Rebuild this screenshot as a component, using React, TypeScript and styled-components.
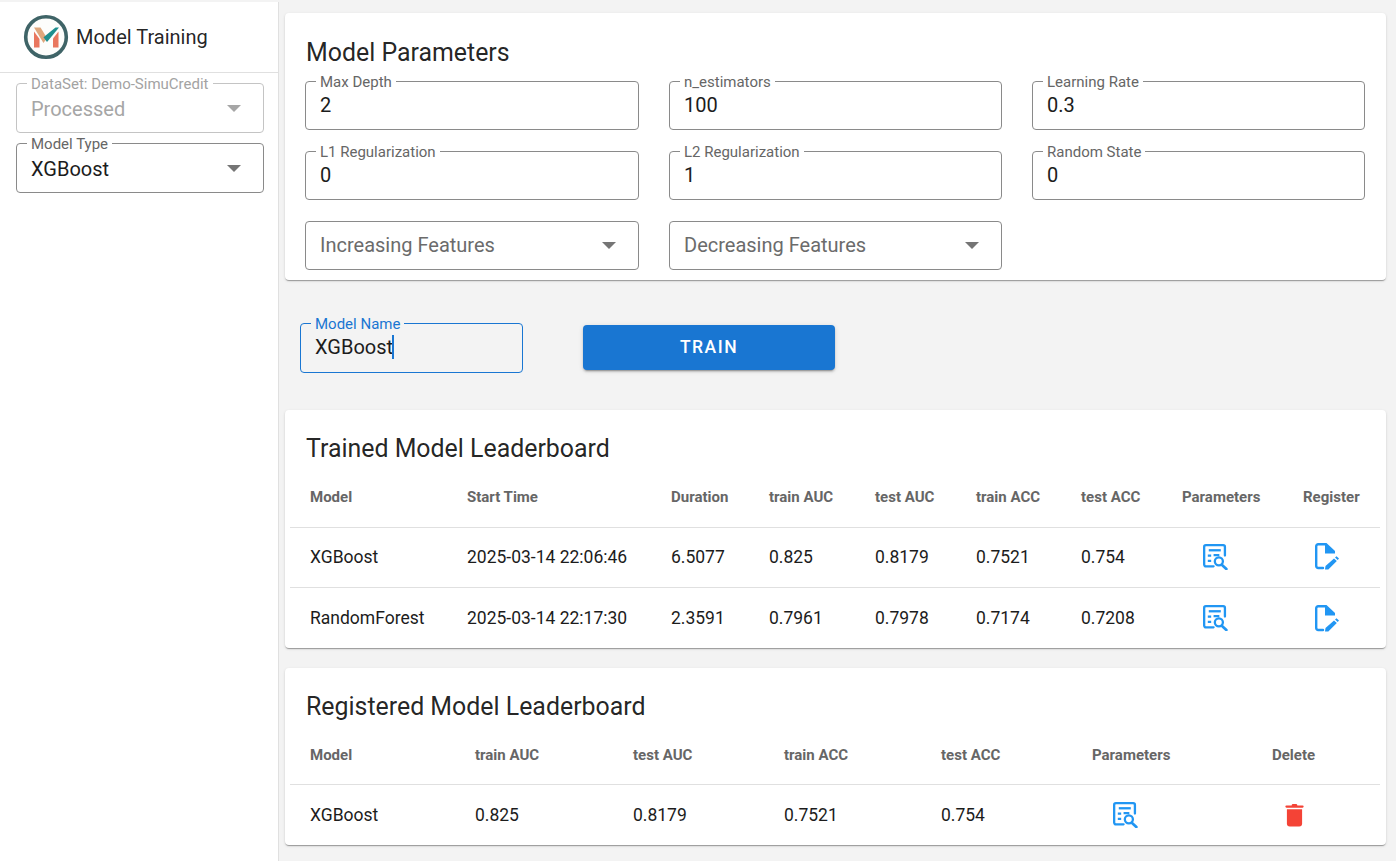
import React from 'react';
import styled, { createGlobalStyle } from 'styled-components';

const GlobalStyle = createGlobalStyle`
  html, body {
    margin: 0;
    height: 100%;
    overflow: hidden;
    background-color: #f3f3f3;
    font-family: Roboto, "Liberation Sans", sans-serif;
    color: rgba(0, 0, 0, 0.87);
  }
  * {
    box-sizing: border-box;
  }
`;

const Page = styled.div`
  display: flex;
  height: 861px;
  padding-top: 2px;
`;

const Sidebar = styled.aside`
  width: 279px;
  flex: none;
  background-color: #fff;
  border-right: 1px solid #e0e0e0;
`;

const SidebarHeader = styled.div`
  display: flex;
  align-items: center;
  gap: 7px;
  height: 71px;
  padding: 0 0 0 23px;
  border-bottom: 1px solid #e0e0e0;
  font-size: 20px;
`;

const SidebarFields = styled.div`
  display: flex;
  flex-direction: column;
  gap: 10px;
  padding: 10px 14px 0 16px;
`;

const Main = styled.main`
  flex: 1;
  display: flex;
  flex-direction: column;
  padding: 11px 10px 0 6px;
`;

const Card = styled.section<{ $height: number; $gapAfter?: number }>`
  height: ${(p) => p.$height}px;
  margin-bottom: ${(p) => p.$gapAfter ?? 0}px;
  background-color: #fff;
  border-radius: 4px;
  box-shadow: 0 2px 1px -1px rgba(0, 0, 0, 0.2), 0 1px 1px 0 rgba(0, 0, 0, 0.14),
    0 1px 3px 0 rgba(0, 0, 0, 0.12);
`;

const ParamsCard = styled(Card)`
  padding: 26px 21px 0 20px;
`;

const CardTitle = styled.h2`
  margin: 0;
  font-size: 24.9px;
  font-weight: 400;
  line-height: 28px;
`;

const ParamsTitle = styled(CardTitle)`
  padding-left: 1px;
`;

const ParamGrid = styled.div`
  display: grid;
  grid-template-columns: 334px 333px 333px;
  column-gap: 30px;
  row-gap: 21px;
  margin-top: 14px;
`;

const Field = styled.div<{ $accent?: boolean; $muted?: boolean; $w?: number; $h?: number }>`
  position: relative;
  display: flex;
  align-items: center;
  justify-content: space-between;
  width: ${(p) => (p.$w ? `${p.$w}px` : 'auto')};
  height: ${(p) => p.$h ?? 49}px;
  padding: 0 22px 0 14px;
  border-radius: 4px;
  border: 1px solid ${(p) => (p.$accent ? '#1976d2' : p.$muted ? '#c4c4c4' : '#8a8a8a')};
`;

const Legend = styled.span<{ $accent?: boolean; $muted?: boolean }>`
  position: absolute;
  top: -8px;
  left: 10px;
  padding: 0 4px;
  font-size: 15px;
  line-height: 16px;
  color: ${(p) => (p.$accent ? '#1976d2' : p.$muted ? '#a3a3a3' : '#666')};
  background-color: ${(p) => (p.$accent ? '#f3f3f3' : '#fff')};
`;

const FieldValue = styled.span<{ $muted?: boolean; $placeholder?: boolean; $low?: boolean }>`
  display: inline-flex;
  align-items: center;
  padding: ${(p) => (p.$low ? '2px 0 0' : '0 0 2px')};
  font-size: 20px;
  line-height: 24px;
  color: ${(p) => (p.$muted ? '#a6a6a6' : p.$placeholder ? '#6b6b6b' : '#1c1c1c')};
`;

const Caret = styled.span`
  display: inline-block;
  width: 2px;
  height: 24px;
  margin-left: -1px;
  background-color: #1976d2;
`;

const TrainRow = styled.div`
  display: flex;
  align-items: center;
  height: 130px;
  padding: 6px 0 0 15px;
  gap: 60px;
`;

const TrainButton = styled.button`
  width: 252px;
  height: 45px;
  margin-bottom: 2px;
  border: none;
  border-radius: 4px;
  background-color: #1976d2;
  color: #fff;
  font-family: inherit;
  font-size: 17.5px;
  font-weight: 500;
  letter-spacing: 1.5px;
  box-shadow: 0 3px 1px -2px rgba(0, 0, 0, 0.2), 0 2px 2px 0 rgba(0, 0, 0, 0.14),
    0 1px 5px 0 rgba(0, 0, 0, 0.12);
`;

const TableCard = styled(Card)`
  padding: 25px 6px 0 5px;
`;

const TableTitle = styled(CardTitle)`
  padding-left: 16px;
`;

const Row = styled.div<{ $cols: string; $height: number; $head?: boolean; $last?: boolean; $raised?: boolean }>`
  display: grid;
  grid-template-columns: ${(p) => p.$cols};
  align-items: center;
  height: ${(p) => p.$height}px;
  padding: ${(p) => (p.$head ? '4px' : '0')} 0 ${(p) => (p.$raised ? '2px' : '0')} 20px;
  border-bottom: ${(p) => (p.$last ? 'none' : '1px solid #e0e0e0')};
  font-size: ${(p) => (p.$head ? '15px' : '17.5px')};
  font-weight: ${(p) => (p.$head ? 700 : 400)};
  color: ${(p) => (p.$head ? '#666' : '#1c1c1c')};
`;

const IconCell = styled.span<{ $shift: number }>`
  display: flex;
  padding-left: ${(p) => p.$shift}px;
`;

const trainedCols = '157px 204px 98px 106px 101px 105px 101px 121px 1fr';
const registeredCols = '165px 158px 151px 157px 151px 180px 1fr';

const SearchDocIcon = () => (
  <svg width="25" height="26" viewBox="0 0 26 27" fill="none">
    <path
      d="M11 23.200H3a1.800 1.800 0 0 1-1.800-1.800V3A1.800 1.800 0 0 1 3 1.200h18A1.800 1.800 0 0 1 22.800 3v9"
      stroke="#2196f3"
      strokeWidth="2.400"
      strokeLinecap="round"
    />
    <path d="M6 6.500h12.500" stroke="#2196f3" strokeWidth="2.400" />
    <path d="M5 12h3.500M5 17.500h3.500M11 11.500h6" stroke="#2196f3" strokeWidth="2.400" />
    <circle cx="16.500" cy="18" r="4.200" stroke="#2196f3" strokeWidth="2.400" />
    <path d="M19.500 21.500l4.800 4.500" stroke="#2196f3" strokeWidth="2.800" strokeLinecap="round" />
  </svg>
);

const EditDocIcon = () => (
  <svg width="24" height="27" viewBox="0 0 24 27" fill="none">
    <path
      d="M8 25H3.200a2 2 0 0 1-2-2V3.200a2 2 0 0 1 2-2H10"
      stroke="#2196f3"
      strokeWidth="2.400"
      strokeLinecap="round"
    />
    <path d="M10 0h1.500l8.500 8v2.500H10z" fill="#2196f3" />
    <path d="M10 26.500l.5-3.500 8.500-7.500 2.800 2.500-8.500 8.500z" fill="#2196f3" />
    <path d="M20 14.500l1.500-1.300 2.500 2.300-1.300 1.500z" fill="#2196f3" />
  </svg>
);

const TrashIcon = () => (
  <svg width="19" height="24" viewBox="0 0 20 24" fill="none">
    <path d="M7 2a1.500 1.500 0 0 1 1.500-1.500h3A1.500 1.500 0 0 1 13 2h5.500a1 1 0 0 1 0 2.300H1.500a1 1 0 0 1 0-2.300z" fill="#f44336" />
    <path d="M2 6h16v15a3 3 0 0 1-3 3H5a3 3 0 0 1-3-3z" fill="#f44336" />
  </svg>
);

const LogoIcon = () => (
  <svg width="46" height="46" viewBox="0 0 46 46" fill="none">
    <circle cx="23" cy="23" r="20.300" fill="#fdfdfb" stroke="#3f6467" strokeWidth="3.600" />
    <path d="M11 13.500h6.500L24 24l-3.500 5z" fill="#dfa77c" />
    <path d="M32.500 13.500h3.500L24 28l-3.500-4.800z" fill="#1f8f8e" />
    <path d="M11 17.500l5.500 7.500v8.500H11z" fill="#e9775e" />
    <path d="M35.500 17.500V33.500H30V24.500z" fill="#e9775e" />
  </svg>
);

const ArrowIcon = ({ muted }: { muted?: boolean }) => (
  <svg width="14" height="7" viewBox="0 0 14 7">
    <path d="M0 0h14L7 7z" fill={muted ? '#a6a6a6' : '#757575'} />
  </svg>
);

function App() {
  return (
    <>
      <GlobalStyle />
      <Page>
        <Sidebar>
          <SidebarHeader>
            <LogoIcon />
            Model Training
          </SidebarHeader>
          <SidebarFields>
            <Field $muted $h={50}>
              <Legend $muted>DataSet: Demo-SimuCredit</Legend>
              <FieldValue $muted $low>
                Processed
              </FieldValue>
              <ArrowIcon muted />
            </Field>
            <Field $h={50}>
              <Legend>Model Type</Legend>
              <FieldValue $low>XGBoost</FieldValue>
              <ArrowIcon />
            </Field>
          </SidebarFields>
        </Sidebar>
        <Main>
          <ParamsCard $height={267}>
            <ParamsTitle>Model Parameters</ParamsTitle>
            <ParamGrid>
              <Field>
                <Legend>Max Depth</Legend>
                <FieldValue>2</FieldValue>
              </Field>
              <Field>
                <Legend>n_estimators</Legend>
                <FieldValue>100</FieldValue>
              </Field>
              <Field>
                <Legend>Learning Rate</Legend>
                <FieldValue>0.3</FieldValue>
              </Field>
              <Field>
                <Legend>L1 Regularization</Legend>
                <FieldValue>0</FieldValue>
              </Field>
              <Field>
                <Legend>L2 Regularization</Legend>
                <FieldValue>1</FieldValue>
              </Field>
              <Field>
                <Legend>Random State</Legend>
                <FieldValue>0</FieldValue>
              </Field>
              <Field>
                <FieldValue $placeholder>Increasing Features</FieldValue>
                <ArrowIcon />
              </Field>
              <Field>
                <FieldValue $placeholder>Decreasing Features</FieldValue>
                <ArrowIcon />
              </Field>
            </ParamGrid>
          </ParamsCard>
          <TrainRow>
            <Field $accent $w={223} $h={50}>
              <Legend $accent>Model Name</Legend>
              <FieldValue>
                XGBoost
                <Caret />
              </FieldValue>
            </Field>
            <TrainButton>TRAIN</TrainButton>
          </TrainRow>
          <TableCard $height={238} $gapAfter={20}>
            <TableTitle>Trained Model Leaderboard</TableTitle>
            <Row $cols={trainedCols} $height={65} $head>
              <span>Model</span>
              <span>Start Time</span>
              <span>Duration</span>
              <span>train AUC</span>
              <span>test AUC</span>
              <span>train ACC</span>
              <span>test ACC</span>
              <span>Parameters</span>
              <span>Register</span>
            </Row>
            <Row $cols={trainedCols} $height={60} $raised>
              <span>XGBoost</span>
              <span>2025-03-14 22:06:46</span>
              <span>6.5077</span>
              <span>0.825</span>
              <span>0.8179</span>
              <span>0.7521</span>
              <span>0.754</span>
              <IconCell $shift={21}>
                <SearchDocIcon />
              </IconCell>
              <IconCell $shift={12}>
                <EditDocIcon />
              </IconCell>
            </Row>
            <Row $cols={trainedCols} $height={60} $last>
              <span>RandomForest</span>
              <span>2025-03-14 22:17:30</span>
              <span>2.3591</span>
              <span>0.7961</span>
              <span>0.7978</span>
              <span>0.7174</span>
              <span>0.7208</span>
              <IconCell $shift={21}>
                <SearchDocIcon />
              </IconCell>
              <IconCell $shift={12}>
                <EditDocIcon />
              </IconCell>
            </Row>
          </TableCard>
          <TableCard $height={177}>
            <TableTitle>Registered Model Leaderboard</TableTitle>
            <Row $cols={registeredCols} $height={64} $head>
              <span>Model</span>
              <span>train AUC</span>
              <span>test AUC</span>
              <span>train ACC</span>
              <span>test ACC</span>
              <span>Parameters</span>
              <span>Delete</span>
            </Row>
            <Row $cols={registeredCols} $height={60} $last>
              <span>XGBoost</span>
              <span>0.825</span>
              <span>0.8179</span>
              <span>0.7521</span>
              <span>0.754</span>
              <IconCell $shift={21}>
                <SearchDocIcon />
              </IconCell>
              <IconCell $shift={13}>
                <TrashIcon />
              </IconCell>
            </Row>
          </TableCard>
        </Main>
      </Page>
    </>
  );
}

export default App;
